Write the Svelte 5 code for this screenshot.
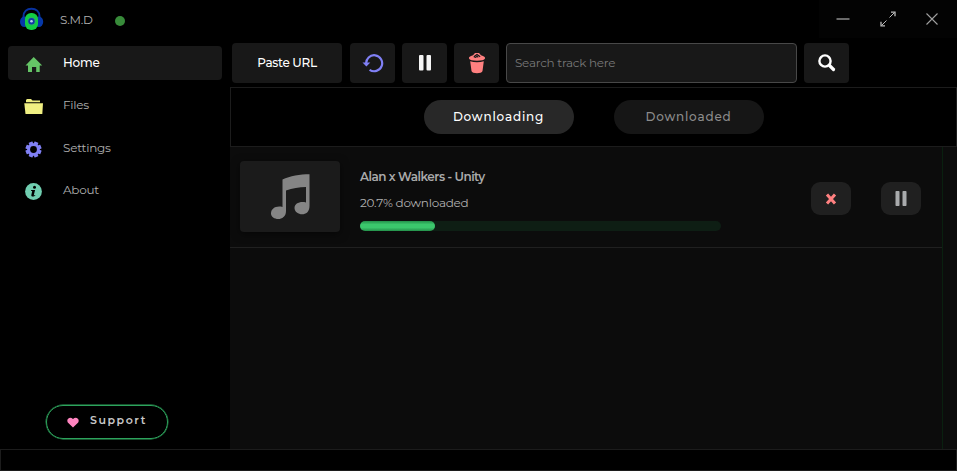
<script>
  const nav = [
    { id: 'home', label: 'Home', ls: -0.2 },
    { id: 'files', label: 'Files', ls: -0.25 },
    { id: 'settings', label: 'Settings', ls: -0.25 },
    { id: 'about', label: 'About', ls: -0.25 }
  ];
  let active = $state('home');
  let tab = $state('Downloading');
  const progress = 20.7;
</script>

<div class="app">
  <header>
    <svg class="logo" width="24" height="24" viewBox="0 0 24 24">
      <path d="M3.500 12V9.500C3.500 4.500 7 1.700 11.500 1.700S19.500 4.500 19.500 9.500V12" fill="none" stroke="#0832a0" stroke-width="2" />
      <ellipse cx="4.300" cy="14.800" rx="4.300" ry="5.200" fill="#0638a8" />
      <ellipse cx="18.900" cy="14.800" rx="4.300" ry="5.200" fill="#0638a8" />
      <rect x="5" y="6" width="13" height="17" rx="6" fill="#12cf43" />
      <circle cx="11.500" cy="14.300" r="4.200" fill="#29b368" />
      <circle cx="11.500" cy="14.300" r="3.200" fill="#1239a8" />
      <circle cx="11.500" cy="14.300" r="1.300" fill="#b5d7ee" />
    </svg>
    <span class="brand">S.M.D</span>
    <i class="dot"></i>
    <div class="window">
      <svg width="14" height="14" viewBox="0 0 14 14"><path d="M.5 7h13" stroke="#777" stroke-width="1.800" /></svg>
      <svg width="16" height="16" viewBox="0 0 16 16" fill="none" stroke="#bbb">
        <path d="M9.500 6.500l5-5M6.500 9.500l-5 5" stroke-width="1" /><path d="M11 1.200h4v4M1 10.800v4h4" stroke-width="1.300" />
      </svg>
      <svg width="12" height="12" viewBox="0 0 12 12"><path d="M.5.500l11 11M11.500.500l-11 11" stroke="#a0a0a0" stroke-width="1.100" /></svg>
    </div>
  </header>

  <div class="body">
    <aside>
      <nav>
        {#each nav as item (item.id)}
          <button class="nav" class:active={active === item.id} onclick={() => (active = item.id)}>
            <svg width="20" height="18" viewBox="0 0 20 18">
              {#if item.id === 'home'}
                <path d="M9.700 1L18.200 9.500H15.700V16h-3.500v-5H8v5H4V9.500H1.500z" fill="#65c466" />
              {:else if item.id === 'files'}
                <path d="M2 4V2L3 1h4l1.500 1.500H16V4.300H2z" fill="#eeed80" />
                <path d="M.3 5.300H19L18.300 16H1.500z" fill="#f0ef82" />
              {:else if item.id === 'settings'}
                <g fill="#8080f5" transform="translate(9.500 9.500)">
                  {#each [22.5, 67.5, 112.5, 157.5] as a}
                    <rect x="-2" y="-8" width="4" height="16" rx=".3" transform="rotate({a})" />
                  {/each}
                  <circle r="6.300" />
                  <circle r="3.400" fill="#000" />
                </g>
              {:else}
                <circle cx="9.500" cy="9.500" r="8.400" fill="#70ceb0" />
                <circle cx="10.500" cy="5.200" r="1.500" fill="#000" />
                <path d="M7.200 8h3.900l-1.400 5.500 1.500-.6v.8c-1 .8-4 1.500-3.900-.4l.9-4.200-1.200-.2z" fill="#000" />
              {/if}
            </svg>
            <span style:letter-spacing="{item.ls}px">{item.label}</span>
          </button>
        {/each}
      </nav>
      <button class="support">
        <svg width="12" height="11" viewBox="0 0 12 11"><path d="M6 10.500L.8 5.400C-1 2.500 2.500-1 6 1.900 9.500-1 13 2.500 11.200 5.400z" fill="#ff85c0" /></svg>
        <span>Support</span>
      </button>
    </aside>

    <main>
      <div class="toolbar">
        <button class="tool paste"><span>Paste URL</span></button>
        <button class="tool" aria-label="Restart">
          <svg width="22" height="20" viewBox="0 0 22 20"><path d="M4.200 11A8 8 0 1 1 7.600 16.800" fill="none" stroke="#8080f5" stroke-width="2.200" /><path d="M.5 9.500h7.800L4.400 13.500z" fill="#8080f5" /></svg>
        </button>
        <button class="tool" aria-label="Pause all">
          <svg width="12" height="16" viewBox="0 0 12 16" fill="#f5f5f5"><rect width="4.500" height="15.500" rx="1" /><rect x="7.500" width="4.500" height="15.500" rx="1" /></svg>
        </button>
        <button class="tool" aria-label="Delete all">
          <svg width="18" height="22" viewBox="0 0 18 22" fill="#ff8080"><path d="M1 6.500C.5 5 2 4 5 3.200L7 1h4l2 2.200c3 .8 4.500 1.800 4 3.300-.6 1.500-3.500 2.200-8 2.200S1.500 8 1 6.500z" /><path d="M2.200 9.300c4 1.300 9.600 1.300 13.600 0L14.500 19c-.5 3-10.500 3-11 0z" /><path d="M5.800 4.700L9 2.500l3.200 2.200M5.800 4.700l2 .7L9 4.200l1.200 1.200" fill="none" stroke="#18181a" stroke-width="1.100" /></svg>
        </button>
        <input placeholder="Search track here" aria-label="Search" />
        <button class="tool" aria-label="Find">
          <svg width="18" height="18" viewBox="0 0 18 18" fill="none" stroke="#fff"><circle cx="7" cy="7" r="5.600" stroke-width="2.400" /><path d="M11.500 11.500l4 4" stroke-width="3.200" stroke-linecap="round" /></svg>
        </button>
      </div>

      <div class="tabs">
        {#each ['Downloading', 'Downloaded'] as t}
          <button class="tab" class:on={tab === t} onclick={() => (tab = t)}>{t}</button>
        {/each}
      </div>

      <div class="list">
        <div class="rows">
          <article>
            <div class="cover">
              <svg width="40" height="46" viewBox="0 0 40 46"><path d="M12.500 5.500C20 2 30 .300 39.500.300V32c0 12-15 9.500-15 2 0-4.500 5.500-7 11.500-5.500V13c-7 0-13.500 1.200-20 3.500V37c0 11-15 9.500-15 2.500C1 34.500 6 31.500 12.500 33z" fill="#858585" /></svg>
            </div>
            <div class="info">
              <strong>Alan x Walkers - Unity</strong>
              <span class="status">{progress}% downloaded</span>
              <div class="bar"><div class="fill" style:width="{progress}%"></div></div>
            </div>
            <div class="actions">
              <button aria-label="Cancel"><svg width="12" height="12" viewBox="0 0 12 12"><path d="M2 1.500l8 9M10 1.500l-8 9" stroke="#ff8080" stroke-width="3" /></svg></button>
              <button aria-label="Pause"><svg width="12" height="15" viewBox="0 0 12 15" fill="#a9abad"><rect x=".5" width="4" height="15" rx=".7" /><rect x="7.500" width="4" height="15" rx=".7" /></svg></button>
            </div>
          </article>
        </div>
      </div>
    </main>
  </div>
  <footer></footer>
</div>

<style>
  :global(body) { background: #000; }
  * { box-sizing: border-box; }
  .app {
    width: 957px; height: 471px; display: flex; flex-direction: column; overflow: hidden;
    background: #000; color: #b0b0b0; font: 12px/16px Montserrat, Inter, "Open Sans", sans-serif;
  }
  button { font: inherit; color: inherit; border: 0; padding: 0; background: none; white-space: nowrap; }
  svg { display: block; flex: none; }
  header { height: 38px; flex: none; display: flex; align-items: center; padding-left: 20px; }
  .brand { margin-left: 16px; width: 55px; margin-top: 2px; letter-spacing: -.3px; }
  .dot { width: 10px; height: 10px; border-radius: 50%; background: #388b3a; margin-top: 4px; }
  .window { margin-left: auto; width: 138px; height: 38px; background: #030303; display: flex; align-items: center; padding-left: 17px; gap: 30px; }
  .body { flex: 1; display: flex; min-height: 0; }
  aside { width: 230px; display: flex; flex-direction: column; justify-content: space-between; padding: 8px 8px 10px; }
  nav { display: flex; flex-direction: column; gap: 8.300px; }
  .nav { height: 34px; width: 214px; display: flex; align-items: center; border-radius: 4px; padding-left: 16px; gap: 19px; }
  .nav svg { margin-top: 3px; }
  .nav.active { background: #181818; color: #fff; font-weight: 500; }
  .support { width: 122px; height: 34px; margin-left: 38px; border: 1.500px solid #2da35c; box-shadow: 0 0 0 .4px #2da35c; border-radius: 17px; display: flex; align-items: center; padding-left: 20px; gap: 11px; font-size: 11px; font-weight: 600; letter-spacing: 1.550px; color: #c8c8c8; }
  .support span { margin-top: -4px; }
  main { flex: 1; display: flex; flex-direction: column; }
  .toolbar { height: 49px; display: flex; padding: 5px 0 4px 2px; gap: 7px; }
  .tool { width: 45px; height: 40px; background: #181818; border-radius: 4px; display: flex; align-items: center; justify-content: center; }
  .paste { width: 110px; color: #fff; font-weight: 500; margin-right: 1px; letter-spacing: -.32px; }
  input { width: 291px; height: 40px; background: #181818; border: 1px solid #484848; border-radius: 4px; padding: 0 8px 2px; font: inherit; color: #ccc; letter-spacing: -.260px; outline: 0; }
  input::placeholder { color: #777; opacity: 1; }
  .tabs { height: 60px; border: 1px solid #1c1c1c; display: flex; justify-content: center; align-items: center; gap: 40px; }
  .tab { width: 150px; height: 34px; border-radius: 17px; background: #161616; color: #8c8c8c; letter-spacing: .800px; font-weight: 500; }
  .tab.on { background: #282828; color: #fff; }
  .list { flex: 1; background: #0c0c0c; display: flex; }
  .rows { width: 713px; border-right: 1px solid #09200f; }
  article { height: 101px; border-bottom: 1px solid #202020; display: flex; padding: 14px 0 0 10px; }
  .cover { width: 100px; height: 71px; border-radius: 4px; background: #1b1b1b; box-shadow: 0 2px 9px #0008; display: flex; align-items: center; justify-content: center; }
  .info { width: 361px; margin-left: 20px; padding-top: 8px; display: flex; flex-direction: column; }
  strong { font-weight: 600; letter-spacing: -.480px; color: #aaa; }
  .status { margin-top: 10px; letter-spacing: -.260px; }
  .bar { height: 10px; border-radius: 5px; margin-top: 10px; background: #0e1e14; }
  .fill { height: 10px; border-radius: 5px; background: linear-gradient(#24904a, #3bc76c 35%, #3bc76c 65%, #24904a); }
  .actions { display: flex; gap: 30px; margin-left: 90px; padding-top: 21px; }
  .actions button { width: 40px; height: 33px; border-radius: 9px; background: #202020; display: flex; align-items: center; justify-content: center; }
  footer { height: 22px; flex: none; border: 1px solid #1c1c1c; }
</style>
